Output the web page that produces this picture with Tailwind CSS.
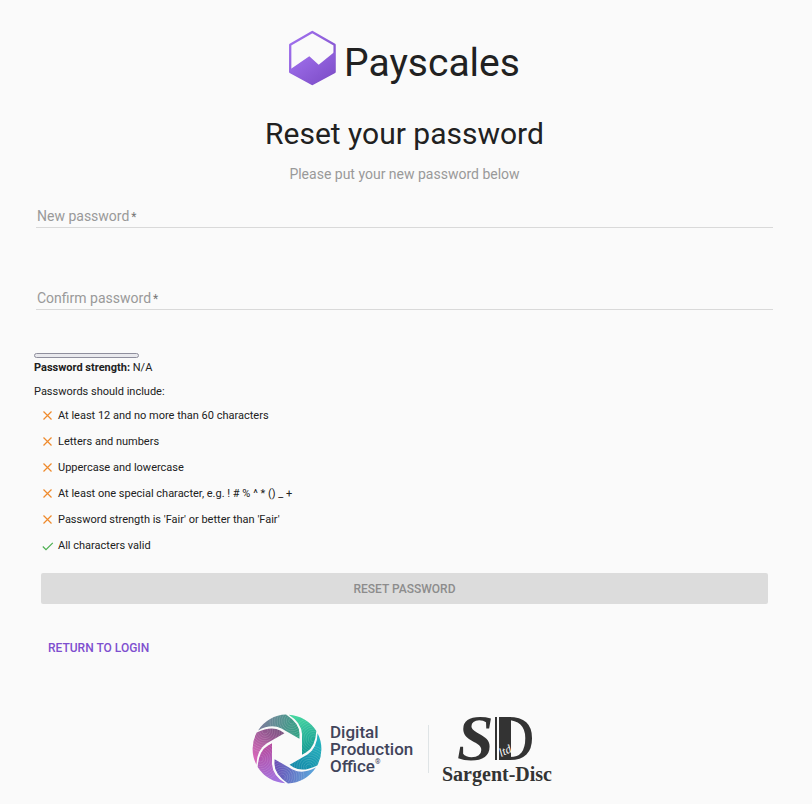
<!DOCTYPE html>
<html lang="en">
<head>
  <meta charset="UTF-8" />
  <meta name="viewport" content="width=device-width, initial-scale=1.0"/>
  <title>Payscales - Reset your password</title>
  <script src="https://cdn.jsdelivr.net/npm/@tailwindcss/browser@4"></script>
</head>
<body class="bg-[#fafafa] text-[#212121] font-[Roboto,sans-serif] min-h-screen">
  <main class="pl-[34px] pr-[37px] pt-[30px]">

    <header class="flex justify-center gap-2">
      <svg class="w-[47px] h-14" viewBox="0 0 47 56" aria-hidden="true">
        <defs>
          <linearGradient id="hex" x1="0" y1="0" x2="1" y2="1">
            <stop offset="0" stop-color="#a373f0"/>
            <stop offset="1" stop-color="#7a4ac4"/>
          </linearGradient>
        </defs>
        <path d="M23.3 1.9 45.6 14.8V42L23.3 54 1.2 42V14.8Z" fill="none" stroke="url(#hex)" stroke-width="2.3" stroke-linejoin="round"/>
        <path d="M1 39.5 20.3 26.3 29.7 34.8 46 21.5V42L23.3 54.5 1 42Z" fill="url(#hex)"/>
      </svg>
      <h1 class="text-[39px] leading-[66px] h-14">Payscales</h1>
    </header>

    <h2 class="mt-[30px] text-center text-[30px] leading-9">Reset your password</h2>
    <p class="mt-3 text-center text-sm leading-5 text-[#999999]">Please put your new password below</p>

    <form>
      <div class="relative mt-[22px] mx-[2px]">
        <input type="password" id="newPassword" required class="block w-full h-[22px] border-b border-[#d9d9d9] bg-transparent text-sm outline-none"/>
        <label for="newPassword" class="absolute left-px top-0 text-sm leading-5 text-[#999999]">New password<span class="ml-[2px] text-xs text-[#777777]">*</span></label>
      </div>
      <div class="relative mt-[60px] mx-[2px]">
        <input type="password" id="confirmPassword" required class="block w-full h-[22px] border-b border-[#d9d9d9] bg-transparent text-sm outline-none"/>
        <label for="confirmPassword" class="absolute left-px top-0 text-sm leading-5 text-[#999999]">Confirm password<span class="ml-[2px] text-xs text-[#777777]">*</span></label>
      </div>

      <div role="meter" aria-label="Password strength" aria-valuenow="0" aria-valuemin="0" aria-valuemax="4" class="mt-[43px] w-[105px] h-[5px] rounded-sm border border-[#8f8f9d] bg-[#e9e9ed]"></div>
      <p class="mt-[2px] text-[11px] leading-4"><b>Password strength:</b> N/A</p>
      <p class="mt-2 text-[11px] leading-4">Passwords should include:</p>

      <ul class="mt-[3px] pl-2 text-[11px] leading-[26px]">
        <li class="flex items-center gap-1">
          <svg class="w-3 h-3 text-[#ef8a2c]" viewBox="0 0 12 12" fill="none" stroke="currentColor" stroke-width="1.2"><path d="M1.5 1.5 9.5 9.5M9.5 1.5 1.5 9.5"/></svg>
          At least 12 and no more than 60 characters
        </li>
        <li class="flex items-center gap-1">
          <svg class="w-3 h-3 text-[#ef8a2c]" viewBox="0 0 12 12" fill="none" stroke="currentColor" stroke-width="1.2"><path d="M1.5 1.5 9.5 9.5M9.5 1.5 1.5 9.5"/></svg>
          Letters and numbers
        </li>
        <li class="flex items-center gap-1">
          <svg class="w-3 h-3 text-[#ef8a2c]" viewBox="0 0 12 12" fill="none" stroke="currentColor" stroke-width="1.2"><path d="M1.5 1.5 9.5 9.5M9.5 1.5 1.5 9.5"/></svg>
          Uppercase and lowercase
        </li>
        <li class="flex items-center gap-1">
          <svg class="w-3 h-3 text-[#ef8a2c]" viewBox="0 0 12 12" fill="none" stroke="currentColor" stroke-width="1.2"><path d="M1.5 1.5 9.5 9.5M9.5 1.5 1.5 9.5"/></svg>
          At least one special character, e.g. ! # % ^ * () _ +
        </li>
        <li class="flex items-center gap-1">
          <svg class="w-3 h-3 text-[#ef8a2c]" viewBox="0 0 12 12" fill="none" stroke="currentColor" stroke-width="1.2"><path d="M1.5 1.5 9.5 9.5M9.5 1.5 1.5 9.5"/></svg>
          Password strength is 'Fair' or better than 'Fair'
        </li>
        <li class="flex items-center gap-1">
          <svg class="w-3 h-3 text-[#4caf50]" viewBox="0 0 12 12" fill="none" stroke="currentColor" stroke-width="1.2"><path d="M.8 6.5 4 9.7 10.8 2.8"/></svg>
          All characters valid
        </li>
      </ul>

      <div class="mt-[14px] mx-[7px]">
        <button type="submit" disabled class="block w-full h-[31px] rounded-xs bg-[#dcdcdc] text-xs font-medium text-[#8c8c8c]">RESET PASSWORD</button>
      </div>
      <a href="#" class="inline-block mt-9 ml-[14px] text-xs leading-4 font-medium text-[#7e4fcf]">RETURN TO LOGIN</a>
    </form>

    <footer class="mt-[55px] flex justify-center items-start">
      <svg class="w-[70px] h-[70px]" viewBox="-105 -105 210 210" aria-hidden="true">
        <defs>
          <!-- one gradient per blade, clockwise from the top right -->
          <linearGradient id="c0" gradientUnits="userSpaceOnUse" x1="20" y1="-95" x2="60" y2="10"><stop offset="0" stop-color="#45d6a0"/><stop offset="1" stop-color="#139a93"/></linearGradient>
          <linearGradient id="c1" gradientUnits="userSpaceOnUse" x1="20" y1="-95" x2="60" y2="10"><stop offset="0" stop-color="#25b3bd"/><stop offset="1" stop-color="#1287a8"/></linearGradient>
          <linearGradient id="c2" gradientUnits="userSpaceOnUse" x1="20" y1="-95" x2="60" y2="10"><stop offset="0" stop-color="#5ba0d8"/><stop offset="1" stop-color="#6a4cb4"/></linearGradient>
          <linearGradient id="c3" gradientUnits="userSpaceOnUse" x1="20" y1="-95" x2="60" y2="10"><stop offset="0" stop-color="#a375e2"/><stop offset="1" stop-color="#b64a9e"/></linearGradient>
          <linearGradient id="c4" gradientUnits="userSpaceOnUse" x1="20" y1="-95" x2="60" y2="10"><stop offset="0" stop-color="#d767ba"/><stop offset="1" stop-color="#79517f"/></linearGradient>
          <linearGradient id="c5" gradientUnits="userSpaceOnUse" x1="20" y1="-95" x2="60" y2="10"><stop offset="0" stop-color="#76809a"/><stop offset="1" stop-color="#2fa383"/></linearGradient>
          <path id="blade" d="M45 17V-45Q43 -80 5 -103A103 103 0 0 1 88 -54Q85 -6 58 10Z"/>
          <clipPath id="bladeClip"><use href="#blade"/></clipPath>
          <g id="lines" clip-path="url(#bladeClip)" fill="none" stroke="#fff" stroke-opacity=".32" stroke-width="1.2">
            <circle cx="80" cy="-30" r="9"/><circle cx="80" cy="-30" r="16"/><circle cx="80" cy="-30" r="23"/>
            <circle cx="80" cy="-30" r="30"/><circle cx="80" cy="-30" r="37"/><circle cx="80" cy="-30" r="44"/>
            <circle cx="80" cy="-30" r="51"/><circle cx="80" cy="-30" r="58"/><circle cx="80" cy="-30" r="65"/>
          </g>
        </defs>
        <g><use href="#blade" fill="url(#c0)"/><use href="#lines"/></g>
        <g transform="rotate(60)"><use href="#blade" fill="url(#c1)"/><use href="#lines"/></g>
        <g transform="rotate(120)"><use href="#blade" fill="url(#c2)"/><use href="#lines"/></g>
        <g transform="rotate(180)"><use href="#blade" fill="url(#c3)"/><use href="#lines"/></g>
        <g transform="rotate(240)"><use href="#blade" fill="url(#c4)"/><use href="#lines"/></g>
        <g transform="rotate(300)"><use href="#blade" fill="url(#c5)"/><use href="#lines"/></g>
      </svg>
      <p class="ml-2 mt-[10px] w-[98px] text-[17px] leading-[17px] font-medium text-[#41445a]">Digital<br>Production<br>Office<sup class="text-[7px] leading-none -top-2">®</sup></p>
      <div class="mt-[11px] w-px h-12 bg-[#dfe4e6]"></div>
      <div class="ml-[13px] w-[115px] text-[#333333]">
        <svg class="w-full h-[49px] overflow-visible" viewBox="0 0 115 49" fill="currentColor">
          <text x="45" y="46" font-family="Liberation Serif, serif" font-size="66">D</text>
          <rect x="45" y="1" width="13" height="47" fill="#fafafa"/>
          <rect x="53" y="3" width="2" height="43"/>
          <rect x="57" y="3" width="12" height="43"/>
          <text x="15" y="46" font-family="Liberation Serif, serif" font-weight="700" font-style="italic" font-size="66">S</text>
          <text x="59" y="43" font-family="Liberation Serif, serif" font-style="italic" font-size="12" fill="#fafafa" transform="rotate(-25 59 43)">ltd</text>
        </svg>
        <p class="-mt-px font-['Liberation_Serif',serif] text-xl leading-6 font-bold">Sargent-Disc</p>
      </div>
    </footer>
  </main>
</body>
</html>
